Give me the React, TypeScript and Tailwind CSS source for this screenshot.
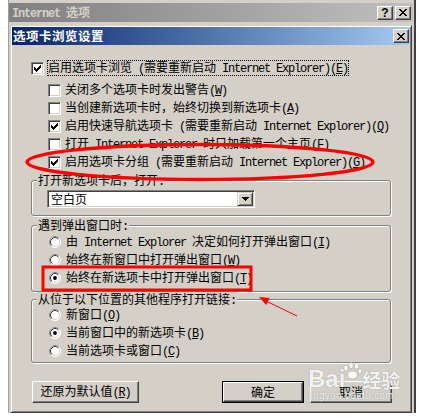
import React from "react";

const LATIN = "font-['Liberation_Mono'] text-[12px] tracking-[-1.2px]";

// mixed CJK / latin text, latin runs get the narrow mono face like SimSun's half-width glyphs
function Txt({ s, k }: { s: string; k?: string }) {
  const parts = s.split(/([\x20-\x7e]+)/).filter(Boolean);
  return (
    <span className="whitespace-pre leading-[14px]">
      {parts.map((p, i) =>
        /^[\x20-\x7e]+$/.test(p) ? (
          <span key={i} className={LATIN}>
            {p}
          </span>
        ) : (
          <span key={i}>{p}</span>
        )
      )}
      {k && (
        <span className={LATIN}>
          (<u>{k}</u>)
        </span>
      )}
    </span>
  );
}

const CHECK_PIX = [
  [6, 0, 1],
  [5, 1, 2],
  [0, 2, 1],
  [4, 2, 3],
  [0, 3, 2],
  [3, 3, 3],
  [0, 4, 5],
  [1, 5, 3],
  [2, 6, 1],
];

const X_PIX = [
  [0, 0, 2],
  [6, 0, 2],
  [1, 1, 2],
  [5, 1, 2],
  [2, 2, 4],
  [3, 3, 2],
  [2, 4, 4],
  [1, 5, 2],
  [5, 5, 2],
  [0, 6, 2],
  [6, 6, 2],
];

function Pix({ rows, w, h }: { rows: number[][]; w: number; h: number }) {
  return (
    <svg width={w} height={h} viewBox={`0 0 ${w} ${h}`} shapeRendering="crispEdges">
      {rows.map(([x, y, len], i) => (
        <rect key={i} x={x} y={y} width={len} height={1} fill="#000" />
      ))}
    </svg>
  );
}

function Check({ on }: { on?: boolean }) {
  return (
    <span className="flex h-[13px] w-[13px] shrink-0 items-center justify-center border border-t-[#808080] border-l-[#808080] border-r-white border-b-white bg-white shadow-[inset_1px_1px_0_#404040,inset_-1px_-1px_0_#d4d0c8]">
      {on && <Pix rows={CHECK_PIX} w={7} h={7} />}
    </span>
  );
}

function Radio({ on }: { on?: boolean }) {
  return (
    <svg width="12" height="12" viewBox="0 0 12 12" className="shrink-0">
      <circle cx="6" cy="6" r="5.5" fill="white" stroke="white" />
      <path d="M2.11 9.89 A5.5 5.5 0 0 1 9.89 2.11" fill="none" stroke="#808080" />
      <circle cx="6" cy="6" r="4.5" fill="none" stroke="#d4d0c8" />
      <path d="M2.82 9.18 A4.5 4.5 0 0 1 9.18 2.82" fill="none" stroke="#404040" />
      {on && <circle cx="6" cy="6" r="1.9" fill="#000" />}
    </svg>
  );
}

function CapBtn({ children, className = "" }: { children: React.ReactNode; className?: string }) {
  return (
    <span
      className={`flex h-[14px] w-[16px] items-center justify-center border border-t-white border-l-white border-r-[#404040] border-b-[#404040] bg-[#d4d0c8] shadow-[inset_-1px_-1px_0_#808080] ${className}`}
    >
      {children}
    </span>
  );
}

function Btn({ children, w, def }: { children: React.ReactNode; w: string; def?: boolean }) {
  const face = (
    <span className="flex h-full w-full items-center justify-center border border-t-white border-l-white border-r-[#404040] border-b-[#404040] bg-[#d4d0c8] shadow-[inset_-1px_-1px_0_#808080]">
      {children}
    </span>
  );
  return (
    <div className={`h-[22px] ${w} ${def ? "border border-black" : ""}`}>{face}</div>
  );
}

function CheckRow({ on, s, k, first }: { on?: boolean; s: string; k: string; first?: boolean }) {
  if (first) {
    return (
      <div className="flex h-[18px] items-center gap-[3px] pl-[19px]">
        <Check on={on} />
        <span className="flex h-[16px] items-center border border-dotted border-black">
          <Txt s={s} k={k} />
        </span>
      </div>
    );
  }
  return (
    <div className="flex h-[18px] items-center gap-[4px] pl-[36px]">
      <Check on={on} />
      <Txt s={s} k={k} />
    </div>
  );
}

function RadioRow({ on, s, k }: { on?: boolean; s: string; k: string }) {
  return (
    <div className="flex h-[18px] items-center gap-[5px] pl-[17px]">
      <Radio on={on} />
      <Txt s={s} k={k} />
    </div>
  );
}

function Group({ label, children, className = "" }: { label: string; children: React.ReactNode; className?: string }) {
  return (
    <fieldset
      className={`mx-[19px] rounded-[3px] border border-[#808080] shadow-[inset_1px_1px_0_#fff,1px_1px_0_#fff] ${className}`}
    >
      <legend className="ml-[5px] h-[14px] bg-[#d4d0c8] px-[1px] leading-[14px]">
        <Txt s={label} />
      </legend>
      {children}
    </fieldset>
  );
}

export default function App() {
  return (
    <div className="relative h-[420px] w-[425px] overflow-hidden bg-white font-['Noto_Sans_CJK_SC',sans-serif] text-[12px] leading-[14px] text-black">
      {/* Internet 选项 window behind */}
      <div className="ml-[8px] flex h-[413px] w-[408px] flex-col border-l border-r-2 border-l-[#a0a0a0] border-r-[#404040] bg-[#d4d0c8] pt-[3px]">
        <div className="mr-[1px] flex h-[19px] items-center bg-gradient-to-r from-[#808080] to-[#c0c0c0] pl-[3px] pr-[2px]">
          <span className="flex-1 font-bold text-[#d4d0c8]">
            <Txt s="Internet 选项" />
          </span>
          <CapBtn>
            <span className="font-['Liberation_Sans'] text-[12px] font-bold leading-none">?</span>
          </CapBtn>
          <CapBtn className="ml-[2px]">
            <Pix rows={X_PIX} w={8} h={7} />
          </CapBtn>
        </div>

        {/* 选项卡浏览设置 dialog */}
        <div className="ml-[1px] mt-[3px] flex w-[402px] flex-1 flex-col border border-t-[#d4d0c8] border-l-[#d4d0c8] border-r-[#404040] border-b-[#404040] p-[1px] shadow-[inset_1px_1px_0_#fff,inset_-1px_-1px_0_#808080]">
          <div className="flex h-[18px] items-center bg-gradient-to-r from-[#0a246a] to-[#a6caf0] pl-[1px] pr-[1px]">
            <span className="flex-1 text-[12.5px] font-bold tracking-[0.5px] text-white">选项卡浏览设置</span>
            <CapBtn>
              <Pix rows={X_PIX} w={8} h={7} />
            </CapBtn>
          </div>

          <div className="flex flex-1 flex-col pt-[14px]">
            <CheckRow first on s="启用选项卡浏览 (需要重新启动 Internet Explorer)" k="E" />
            <div className="mt-[4px] flex flex-col">
              <CheckRow s="关闭多个选项卡时发出警告" k="W" />
              <CheckRow s="当创建新选项卡时，始终切换到新选项卡" k="A" />
              <CheckRow on s="启用快速导航选项卡 (需要重新启动 Internet Explorer)" k="Q" />
              <CheckRow s="打开 Internet Explorer 时只加载第一个主页" k="F" />
              <CheckRow on s="启用选项卡分组 (需要重新启动 Internet Explorer)" k="G" />
            </div>

            <Group label="打开新选项卡后，打开:" className="mt-[2px]">
              <div className="pb-[7px] pl-[15px] pt-[3px]">
                <div className="flex h-[18px] w-[208px] items-center border border-t-[#808080] border-l-[#808080] border-r-white border-b-white bg-white shadow-[inset_1px_1px_0_#404040,inset_-1px_-1px_0_#d4d0c8]">
                  <span className="flex-1 pl-[3px]">空白页</span>
                  <span className="mr-[1px] flex h-[14px] w-[16px] items-center justify-center border border-t-[#d4d0c8] border-l-[#d4d0c8] border-r-[#404040] border-b-[#404040] bg-[#d4d0c8] shadow-[inset_1px_1px_0_#fff,inset_-1px_-1px_0_#808080]">
                    <svg width="7" height="4" viewBox="0 0 7 4" shapeRendering="crispEdges">
                      <path d="M0 0h7v1H6v1H5v1H4v1H3V3H2V2H1V1H0z" fill="#000" />
                    </svg>
                  </span>
                </div>
              </div>
            </Group>

            <Group label="遇到弹出窗口时:" className="mt-[2px]">
              <div className="pb-[4px] pt-[1px]">
                <RadioRow s="由 Internet Explorer 决定如何打开弹出窗口" k="I" />
                <RadioRow s="始终在新窗口中打开弹出窗口" k="W" />
                <RadioRow on s="始终在新选项卡中打开弹出窗口" k="T" />
              </div>
            </Group>

            <Group label="从位于以下位置的其他程序打开链接:">
              <div className="pb-[2px]">
                <RadioRow s="新窗口" k="O" />
                <RadioRow on s="当前窗口中的新选项卡" k="B" />
                <RadioRow s="当前选项卡或窗口" k="C" />
              </div>
            </Group>

            <div className="mt-[18px] flex items-center pl-[20px] pr-[18px]">
              <Btn w="w-[107px]">
                <Txt s="还原为默认值" k="R" />
              </Btn>
              <div className="flex-1" />
              <Btn w="w-[82px]" def>
                确定
              </Btn>
              <div className="w-[6px]" />
              <Btn w="w-[82px]">取消</Btn>
            </div>
          </div>
        </div>
      </div>

      {/* red markings drawn over the screenshot */}
      <svg className="pointer-events-none absolute left-0 top-0" width="425" height="420" viewBox="0 0 425 420">
        <ellipse cx="200" cy="162" rx="173" ry="17.5" fill="none" stroke="#ff0000" strokeWidth="3.5" />
        <rect x="43" y="267" width="208" height="23" fill="none" stroke="#ff0000" strokeWidth="3" />
        <line x1="297" y1="316" x2="266" y2="301" stroke="#ff0000" strokeWidth="1" />
        <polygon points="259,297 269.7,297.9 266.1,305.1" fill="#ff0000" />
      </svg>

      {/* baidu jingyan watermark */}
      <div className="pointer-events-none absolute left-[308px] top-[362px] flex flex-col text-white/90 [text-shadow:0_0_1px_#777]">
        <div className="flex items-end">
          <span className="font-['Liberation_Sans'] text-[24px] font-bold leading-[26px]">Bai</span>
          <svg width="20" height="18" viewBox="0 0 20 18" className="-ml-[3px] mb-[12px]">
            <g fill="#ffffff" fillOpacity="0.9" stroke="#999" strokeWidth="0.5">
              <ellipse cx="4" cy="6" rx="2.2" ry="3" />
              <ellipse cx="9" cy="3.5" rx="2.2" ry="3" />
              <ellipse cx="14.5" cy="4" rx="2.2" ry="3" />
              <ellipse cx="18" cy="9" rx="1.8" ry="2.5" />
              <ellipse cx="10.5" cy="13" rx="5" ry="4" />
            </g>
          </svg>
          <span className="text-[19px] font-bold leading-[24px]">经验</span>
        </div>
        <span className="-mt-[1px] font-['Liberation_Sans'] text-[10px] leading-[10px] tracking-[0.3px]">jingyan.baidu.com</span>
      </div>
    </div>
  );
}
